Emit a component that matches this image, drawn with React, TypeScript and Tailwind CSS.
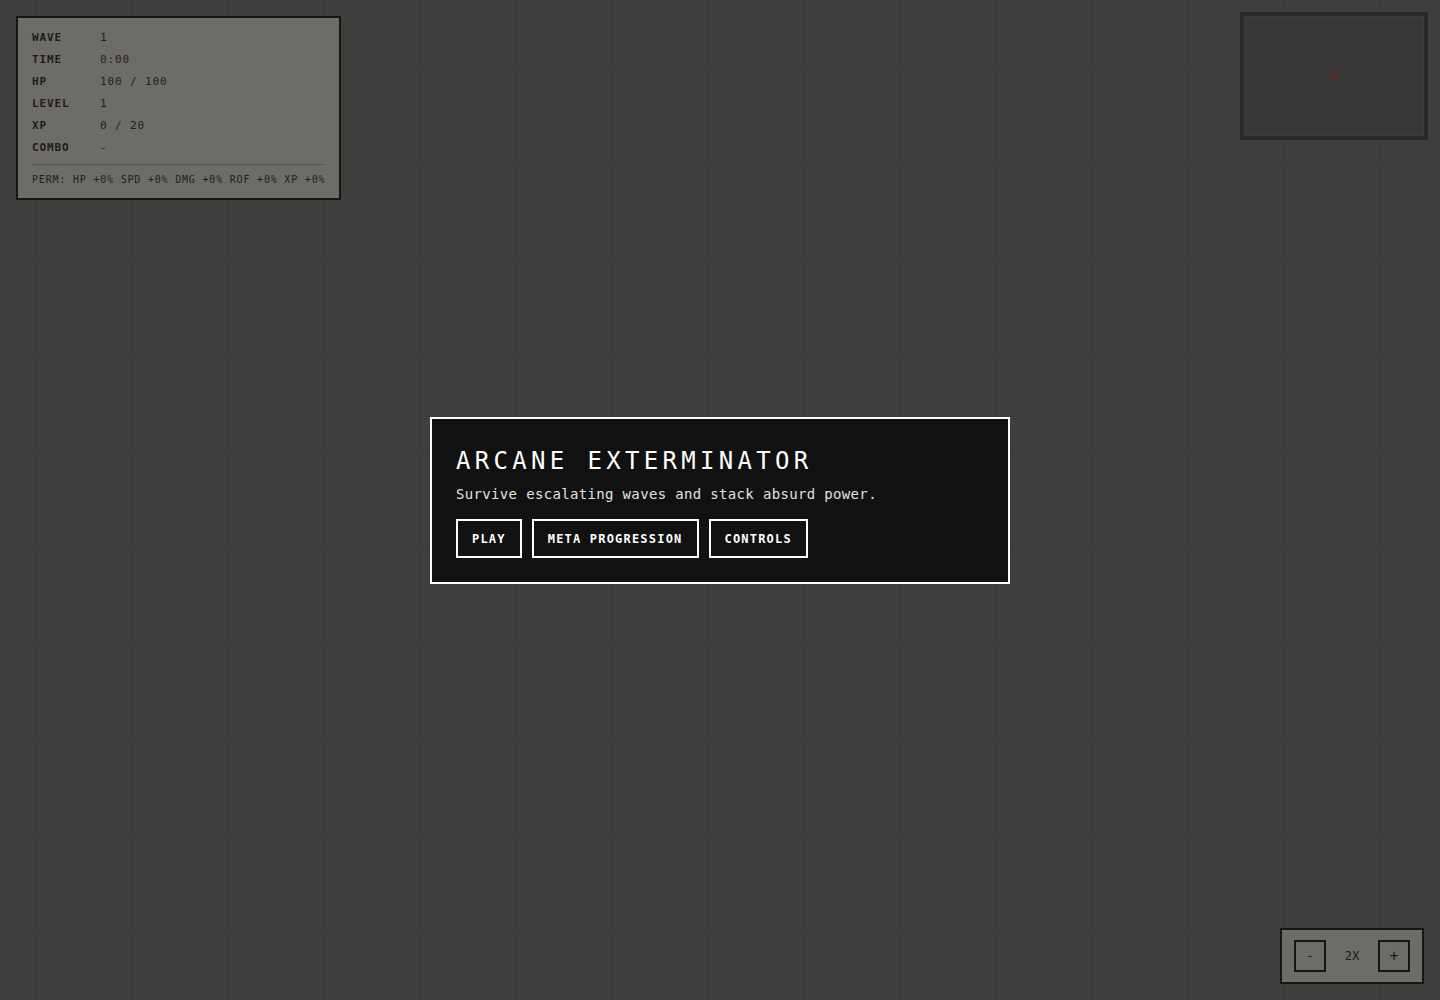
import React from "react";

const mono = { fontFamily: '"DejaVu Sans Mono", "Liberation Mono", monospace' };

const stats: [string, string][] = [
  ["WAVE", "1"],
  ["TIME", "0:00"],
  ["HP", "100 / 100"],
  ["LEVEL", "1"],
  ["XP", "0 / 20"],
  ["COMBO", "-"],
];

export default function App() {
  return (
    <div
      className="relative w-full h-[1000px] overflow-hidden bg-[#3f3e3c] bg-[linear-gradient(to_right,#3c3b39_2px,transparent_2px),linear-gradient(to_bottom,#3c3b39_2px,transparent_2px)] bg-[length:96px_96px] bg-[position:36px_66px]"
      style={mono}
    >
      {/* HUD panel */}
      <div className="absolute left-[16px] top-[16px] w-[325px] border-2 border-[#161616] bg-[#6d6c67] pt-[13px] pb-[11px] px-[14px]">
        <div className="flex flex-col gap-[8px]">
          {stats.map(([k, v]) => (
            <div key={k} className="flex text-[11px] leading-[14px] tracking-[0.08em]">
              <span className="w-[68px] font-bold text-[#1c1b1a]">{k}</span>
              <span className="text-[#1f1e1c]">{v}</span>
            </div>
          ))}
        </div>
        <div className="mt-[9px] h-px bg-[#575652]" />
        <div className="mt-[8px] text-[10px] leading-[14px] tracking-[0.08em] text-[#1f1e1c] whitespace-nowrap">
          PERM: HP +0% SPD +0% DMG +0% ROF +0% XP +0%
        </div>
      </div>

      {/* Minimap */}
      <div className="absolute right-[12px] top-[12px] w-[188px] h-[128px] border-4 border-[#28292a] bg-[#393735]">
        <div className="w-full h-full border border-[#3d3c3a] flex items-center justify-center">
          <div className="w-[6px] h-[6px] rounded-full bg-[#5f2a21]" />
        </div>
      </div>

      {/* Zoom control */}
      <div className="absolute right-[16px] bottom-[16px] w-[144px] h-[56px] border-2 border-[#161616] bg-[#6d6c67] px-[12px] flex items-center justify-between">
        <div className="w-[32px] h-[32px] border-2 border-[#161616] flex items-center justify-center text-[12px] text-[#1c1b1a]">
          -
        </div>
        <span className="text-[12px] text-[#1c1b1a]">2X</span>
        <div className="w-[32px] h-[32px] border-2 border-[#161616] flex items-center justify-center text-[15px] text-[#1c1b1a]">
          +
        </div>
      </div>

      {/* Main menu */}
      <div className="absolute inset-0 flex items-center justify-center">
        <div className="w-[580px] border-2 border-white bg-[#111111] p-[24px]">
          <h1 className="pt-[1px] text-[24px] leading-[34px] tracking-[0.18em] text-white font-normal">
            ARCANE EXTERMINATOR
          </h1>
          <p className="mt-[6px] text-[14px] leading-[20px] tracking-[0.34px] text-[#e2e2e2]">
            Survive escalating waves and stack absurd power.
          </p>
          <div className="mt-[15px] flex gap-[10px]">
            {["PLAY", "META PROGRESSION", "CONTROLS"].map((b) => (
              <button
                key={b}
                className="border-2 border-white bg-[#111111] px-[14px] pt-[11px] pb-[9px] text-[12px] leading-[15px] tracking-[0.1em] font-bold text-white"
                style={mono}
              >
                {b}
              </button>
            ))}
          </div>
        </div>
      </div>
    </div>
  );
}
